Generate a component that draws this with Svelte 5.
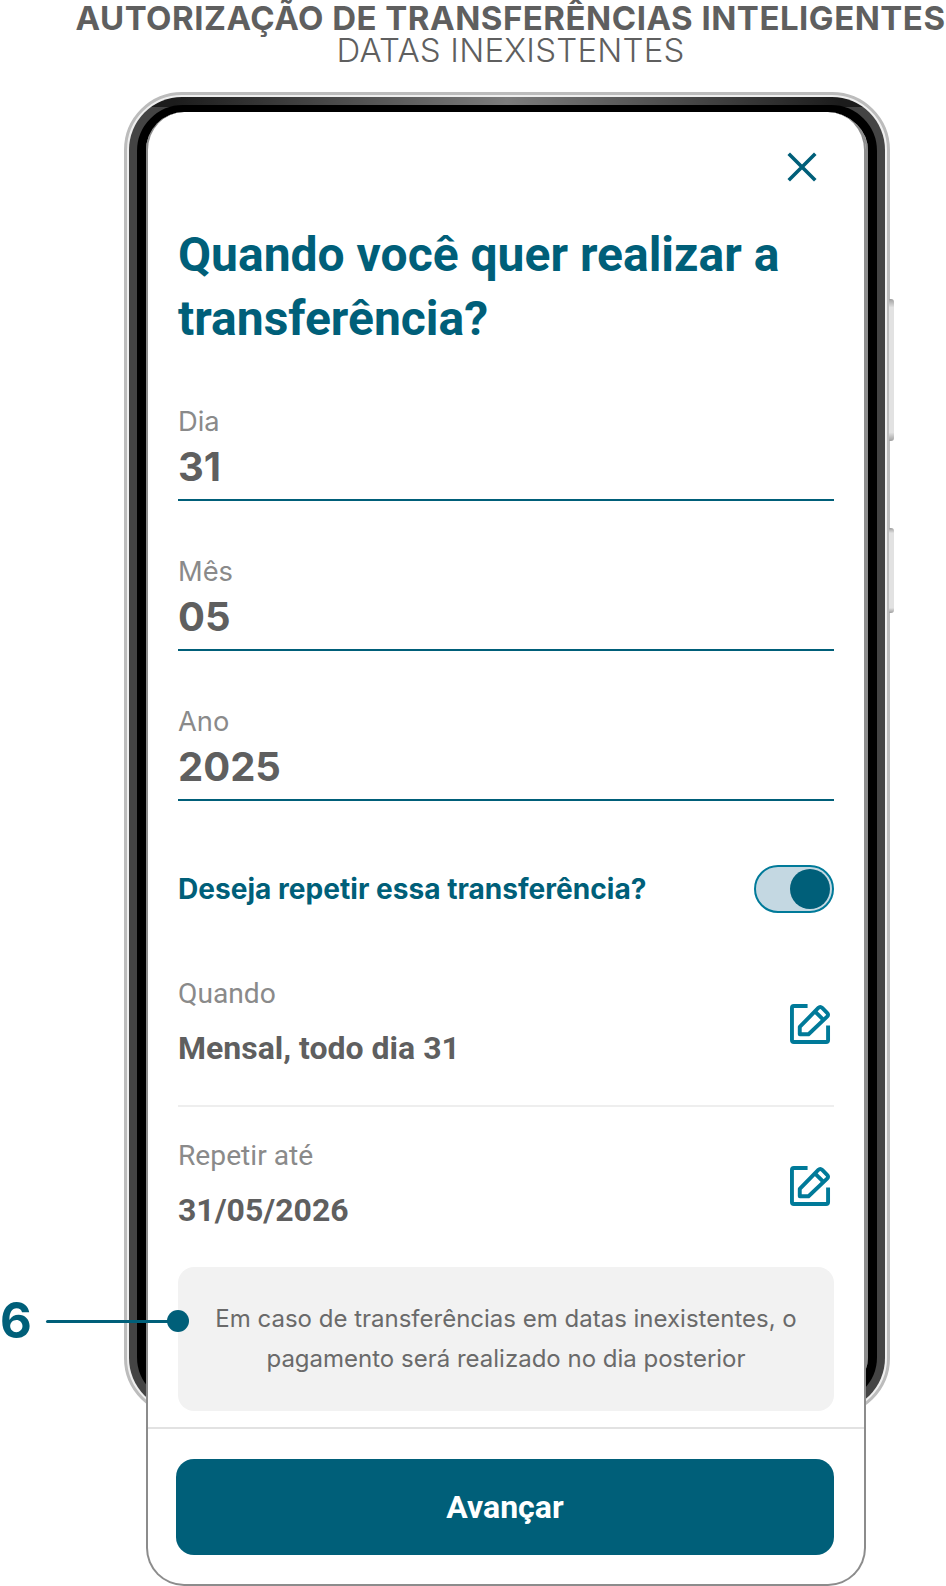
<script>
  const campos = [
    { rotulo: 'Dia', valor: '31' },
    { rotulo: 'Mês', valor: '05' },
    { rotulo: 'Ano', valor: '2025' }
  ];
  const resumo = [
    { rotulo: 'Quando', valor: 'Mensal, todo dia 31' },
    { rotulo: 'Repetir até', valor: '31/05/2026' }
  ];
  let repetir = $state(true);
</script>

<main>
  <header class="topo">
    <h1>AUTORIZAÇÃO DE TRANSFERÊNCIAS INTELIGENTES</h1>
    <p>DATAS INEXISTENTES</p>
  </header>

  <section class="palco">
    <div class="aparelho" aria-hidden="true">
      <span class="lateral um"></span>
      <span class="lateral dois"></span>
    </div>

    <div class="anotacao">
      <span class="numero">6</span>
      <span class="linha"></span>
      <span class="ponto"></span>
    </div>

    <article class="tela">
      <div class="conteudo">
        <div class="fechar">
          <svg width="30" height="30" viewBox="0 0 30 30" fill="none" stroke="#005f79" stroke-width="3.6" stroke-linecap="square">
            <path d="M3 3 L27 27 M27 3 L3 27" />
          </svg>
        </div>

        <h2>Quando você quer realizar a transferência?</h2>

        <div class="campos">
          {#each campos as c}
            <div class="campo">
              <span class="rotulo">{c.rotulo}</span>
              <strong>{c.valor}</strong>
            </div>
          {/each}
        </div>

        <div class="repetir">
          <span>Deseja repetir essa transferência?</span>
          <button class="chave" class:ligada={repetir} aria-label="Repetir" onclick={() => (repetir = !repetir)}>
            <i></i>
          </button>
        </div>

        {#each resumo as r, i}
          <div class="resumo" class:borda={i === 0}>
            <div>
              <span class="rotulo-resumo">{r.rotulo}</span>
              <strong>{r.valor}</strong>
            </div>
            <svg width="41" height="41" viewBox="0 0 42 42" fill="none" stroke="#007a99" stroke-width="4">
              <path d="M18 3 H4 Q2 3 2 5 V38 Q2 40 4 40 H37 Q39 40 39 38 V23" stroke-linecap="butt" />
              <path d="M10 32 V24.5 L29 5 Q31 3 33 5 L38 10 Q40 12 38 14 L19 32 Z" stroke-linejoin="round" />
              <path d="M26 9 L34 17" />
            </svg>
          </div>
        {/each}

        <div class="aviso">
          Em caso de transferências em datas inexistentes, o pagamento será realizado no dia posterior
        </div>
      </div>

      <footer>
        <button class="avancar">Avançar</button>
      </footer>
    </article>
  </section>
</main>

<style>
  :global(body) {
    margin: 0;
    background: #fff;
    font-family: Roboto, "Liberation Sans", sans-serif;
  }

  main {
    width: 946px;
    height: 1586px;
    overflow: hidden;
  }

  .topo {
    height: 112px;
    padding-left: 75px;
    box-sizing: border-box;
    text-align: center;
    color: #5f5f5f;
    font-family: Inter, "Liberation Sans", sans-serif;
  }

  .topo h1 {
    margin: 0;
    padding-top: 2px;
    font-size: 33px;
    letter-spacing: 0.5px;
    line-height: 32px;
    font-weight: 700;
    white-space: nowrap;
  }

  .topo p {
    margin: 0;
    font-size: 33px;
    letter-spacing: 0.2px;
    line-height: 33px;
    font-weight: 300;
  }

  .palco {
    position: relative;
    padding-left: 146px;
  }

  .aparelho {
    position: absolute;
    left: 124px;
    top: -20px;
    width: 766px;
    height: 1324px;
    box-sizing: border-box;
    border-radius: 58px;
    border: 3px solid #bcbcbc;
    background: #efefef;
  }

  .aparelho::before {
    content: '';
    position: absolute;
    inset: 2px;
    border-radius: 53px;
    background:
      linear-gradient(90deg, #1c1c1c 6%, #7c7c7c 50%, #1c1c1c 94%) top / 100% 10px no-repeat,
      #444;
  }

  .aparelho::after {
    content: '';
    position: absolute;
    inset: 10px;
    box-sizing: border-box;
    border-radius: 46px;
    border: 9px solid #000;
    background: #fff;
    box-shadow: inset 0 0 0 2px #8c8c8c;
  }

  .lateral {
    position: absolute;
    right: -7px;
    width: 5px;
    border-radius: 0 3px 3px 0;
    background: linear-gradient(#a0a0a0, #e2e2e2 6%, #e2e2e2 94%, #a0a0a0);
  }

  .um {
    top: 204px;
    height: 142px;
  }

  .dois {
    top: 433px;
    height: 85px;
  }

  .anotacao {
    position: absolute;
    left: 0;
    top: 1192px;
    z-index: 2;
    width: 189px;
    height: 34px;
    display: flex;
    align-items: center;
  }

  .numero {
    width: 46px;
    font-family: Inter, "Liberation Sans", sans-serif;
    font-size: 49px;
    font-weight: 700;
    color: #005f79;
    line-height: 34px;
  }

  .linha {
    flex: 1;
    height: 3px;
    border-radius: 2px;
    background: #005f79;
  }

  .ponto {
    width: 22px;
    height: 22px;
    border-radius: 50%;
    background: #005f79;
    margin-left: -2px;
  }

  .tela {
    position: relative;
    width: 720px;
    height: 1474px;
    box-sizing: border-box;
    display: flex;
    flex-direction: column;
    background: #fff;
    border: 2px solid #8c8c8c;
    border-top: 0;
    border-radius: 38px;
    clip-path: inset(0 -2px -2px -2px round 0 0 38px 38px);
  }

  .conteudo {
    flex: 1;
    padding: 0 30px;
  }

  .fechar {
    display: flex;
    justify-content: flex-end;
    padding: 40px 17px 0 0;
  }

  h2 {
    margin: 41px 0 0;
    font-size: 48px;
    line-height: 64px;
    font-weight: 700;
    color: #005f79;
  }

  .campos {
    margin-top: 30px;
    display: grid;
    gap: 30px;
  }

  .campo {
    height: 120px;
    padding-top: 25px;
    box-sizing: border-box;
    border-bottom: 2px solid #005f79;
    display: flex;
    flex-direction: column;
    font-family: Inter, sans-serif;
  }

  .rotulo {
    font-size: 27.3px;
    line-height: 32px;
    color: #8a8a8a;
  }

  .campo strong {
    font-size: 40px;
    line-height: 58px;
    font-weight: 700;
    color: #5f5f5f;
  }

  .repetir {
    margin-top: 64px;
    height: 48px;
    display: flex;
    align-items: center;
    justify-content: space-between;
    font-family: Inter, sans-serif;
    font-size: 28.1px;
    font-weight: 700;
    color: #005f79;
  }

  .chave {
    width: 80px;
    height: 48px;
    padding: 2px;
    box-sizing: border-box;
    border: 2px solid #007a99;
    border-radius: 24px;
    background: #c4d8e2;
    display: flex;
    justify-content: flex-start;
    cursor: pointer;
  }

  .chave.ligada {
    justify-content: flex-end;
  }

  .chave i {
    width: 40px;
    height: 40px;
    border-radius: 50%;
    background: #005f79;
  }

  .resumo {
    height: 160px;
    box-sizing: border-box;
    display: flex;
    align-items: center;
    justify-content: space-between;
    padding: 0 3px 0 0;
  }

  .resumo.borda {
    height: 162px;
    margin-top: 32px;
    border-bottom: 2px solid #eee;
  }

  .resumo div {
    display: flex;
    flex-direction: column;
    gap: 17px;
    margin-top: -8px;
  }

  .resumo svg {
    margin-top: -3px;
  }

  .rotulo-resumo {
    font-size: 28.2px;
    color: #8a8a8a;
    line-height: 36px;
  }

  .resumo strong {
    font-size: 32px;
    line-height: 38px;
    color: #5f5f5f;
    font-weight: 700;
  }

  .aviso {
    height: 144px;
    box-sizing: border-box;
    padding: 32px 30px;
    border-radius: 16px;
    background: #f2f2f2;
    color: #6a6a6a;
    font-family: Inter, sans-serif;
    font-size: 24px;
    line-height: 40px;
    text-align: center;
  }

  footer {
    height: 157px;
    box-sizing: border-box;
    border-top: 2px solid #e2e2e2;
    padding: 30px 30px 0 28px;
  }

  .avancar {
    width: 100%;
    height: 96px;
    border: 0;
    border-radius: 18px;
    background: #005f79;
    color: #fff;
    font-family: Roboto, sans-serif;
    font-size: 32px;
    font-weight: 700;
  }
</style>
